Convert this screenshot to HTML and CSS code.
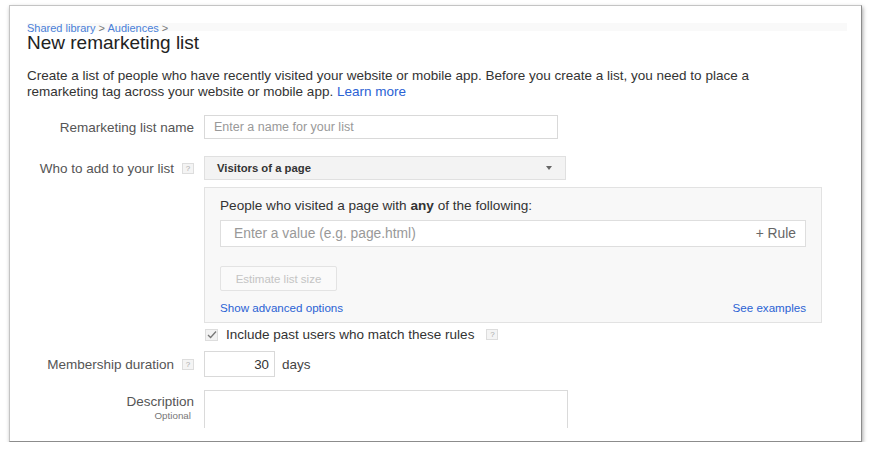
FILE: index.html
```html
<!DOCTYPE html>
<html lang="en">
<head>
    <meta charset="UTF-8">
    <title>New remarketing list</title>
    <link rel="stylesheet" href="styles.css">
</head>
<body>
    <div class="window">
        <div class="page">
            <div class="header">
                <div class="breadcrumb"><a href="#">Shared library</a> &gt; <a href="#">Audiences</a> &gt;</div>
                <h1>New remarketing list</h1>
            </div>

            <p class="intro">Create a list of people who have recently visited your website or mobile app. Before you create a list, you need to place a remarketing tag across your website or mobile app. <a href="#">Learn more</a></p>

            <div class="form">
                <div class="label">Remarketing list name</div>
                <div class="field">
                    <input type="text" class="text-input name-input" placeholder="Enter a name for your list">
                </div>

                <div class="label">Who to add to your list <span class="help">?</span></div>
                <div class="field">
                    <div class="select">
                        <span>Visitors of a page</span>
                        <span class="caret"></span>
                    </div>
                </div>

                <div class="label"></div>
                <div class="field rules-field">
                    <div class="rules">
                        <div class="rules-title">People who visited a page with <b>any</b> of the following:</div>
                        <div class="rule-input">
                            <span class="placeholder">Enter a value (e.g. page.html)</span>
                            <span class="add-rule">+ Rule</span>
                        </div>
                        <button type="button" class="estimate" disabled>Estimate list size</button>
                        <div class="rules-links">
                            <a href="#">Show advanced options</a>
                            <a href="#">See examples</a>
                        </div>
                    </div>
                </div>

                <div class="label"></div>
                <div class="field check-row">
                    <span class="checkbox">
                        <svg width="10" height="9" viewBox="0 0 10 9"><path d="M1 5 L3.6 7.5 L9 1.5" fill="none" stroke="#777" stroke-width="1.3"/></svg>
                    </span>
                    <span>Include past users who match these rules</span>
                    <span class="help">?</span>
                </div>

                <div class="label duration-label">Membership duration <span class="help">?</span></div>
                <div class="field duration-row">
                    <input type="text" class="text-input days-input" value="30">
                    <span>days</span>
                </div>

                <div class="label label-stack">
                    <span>Description</span>
                    <span class="optional">Optional</span>
                </div>
                <div class="field">
                    <textarea class="description"></textarea>
                </div>
            </div>
        </div>
    </div>
</body>
</html>
```

FILE: styles.css
```css
body {
    margin: 0;
    background: #fff;
    font-family: "Liberation Sans", Arial, sans-serif;
    color: #333;
}
a {
    color: #2a62d4;
    text-decoration: none;
}
.window {
    margin: 5px 0 0 9px;
    width: 851px;
    height: 435px;
    border: 1px solid #c4c4c4;
    border-right-color: #8c8c8c;
    border-bottom-color: #8c8c8c;
    box-shadow: 1px 2px 4px rgba(0,0,0,0.35);
    background: #fff;
    overflow: hidden;
}
.page {
    height: 422px;
    overflow: hidden;
    padding-left: 17px;
}
.header {
    margin-top: 16px;
    margin-right: 14px;
    background: linear-gradient(#fff 0, #fff 1px, #f9f9f9 1px, #f9f9f9 9px, #fff 9px);
}
.breadcrumb {
    font-size: 11px;
    line-height: 12px;
    color: #777;
}
.breadcrumb a {
    color: #4a7fd8;
}
h1 {
    margin: 0;
    font-size: 19px;
    font-weight: normal;
    line-height: 17px;
    color: #222;
}
.intro {
    max-width: 790px;
    margin: 17px 0 0;
    font-size: 13.5px;
    line-height: 16.2px;
    color: #333;
}
.form {
    display: grid;
    grid-template-columns: 167px 1fr;
    column-gap: 10px;
    margin-top: 15px;
    font-size: 13.5px;
}
.label {
    display: flex;
    justify-content: flex-end;
    align-items: center;
    gap: 8px;
    color: #555;
    height: 24px;
}
.field {
    margin-bottom: 17px;
}
.help {
    display: inline-block;
    width: 10px;
    height: 9px;
    line-height: 9px;
    border: 1px solid #ddd;
    background: #f4f4f4;
    color: #aaa;
    font-size: 8px;
    text-align: center;
}
.text-input {
    box-sizing: border-box;
    height: 24px;
    border: 1px solid #d9d9d9;
    padding: 0 9px;
    font-family: inherit;
    font-size: 12.5px;
    color: #333;
    outline: none;
}
.text-input::placeholder {
    color: #999;
}
.name-input {
    width: 354px;
}
.select {
    box-sizing: border-box;
    width: 362px;
    height: 24px;
    display: flex;
    align-items: center;
    justify-content: space-between;
    padding: 0 13px 0 12px;
    background: #f3f3f3;
    border: 1px solid #e0e0e0;
    font-size: 11.3px;
    font-weight: bold;
    color: #333;
}
.caret {
    width: 0;
    height: 0;
    border-left: 3.5px solid transparent;
    border-right: 3.5px solid transparent;
    border-top: 4px solid #666;
}
.field:nth-child(4) {
    margin-bottom: 7px;
}
.rules-field {
    margin-bottom: 0;
}
.rules {
    box-sizing: border-box;
    width: 618px;
    height: 136px;
    padding: 10px 15px 0;
    background: #f8f8f8;
    border: 1px solid #e2e2e2;
}
.rules-title {
    font-size: 13.6px;
    line-height: 16px;
    color: #333;
}
.rule-input {
    box-sizing: border-box;
    height: 27px;
    margin-top: 6px;
    display: flex;
    align-items: center;
    justify-content: space-between;
    padding: 0 9px 0 13px;
    background: #fff;
    border: 1px solid #dedede;
    font-size: 13.8px;
}
.placeholder {
    color: #999;
}
.add-rule {
    color: #666;
}
.estimate {
    display: block;
    margin-top: 19px;
    width: 117px;
    height: 25px;
    padding: 0;
    background: #fafafa;
    border: 1px solid #e3e3e3;
    border-radius: 2px;
    font-family: inherit;
    font-size: 11.5px;
    color: #c4c4c4;
}
.rules-links {
    display: flex;
    justify-content: space-between;
    margin-top: 10px;
    font-size: 11.6px;
}
.check-row {
    display: flex;
    align-items: center;
    gap: 8px;
    height: 23px;
    margin-bottom: 5px;
    color: #333;
}
.checkbox {
    display: inline-flex;
    align-items: center;
    justify-content: center;
    width: 11px;
    height: 10px;
    border: 1px solid #ddd;
    background: #f2f2f2;
    margin-left: 1px;
}
.check-row .help {
    margin-left: 4px;
}
.duration-label {
    height: 26px;
}
.duration-row {
    display: flex;
    align-items: center;
    gap: 7px;
    margin-bottom: 13px;
    color: #444;
}
.days-input {
    width: 71px;
    height: 26px;
    text-align: right;
    font-size: 13.3px;
    padding-right: 5px;
}
.label-stack {
    flex-direction: column;
    align-items: flex-end;
    justify-content: flex-start;
    gap: 1px;
    height: auto;
    padding-top: 4px;
}
.optional {
    font-size: 9.8px;
    color: #777;
    margin-right: 3px;
}
.description {
    box-sizing: border-box;
    display: block;
    width: 364px;
    height: 80px;
    border: 1px solid #dadada;
    resize: none;
}
```
